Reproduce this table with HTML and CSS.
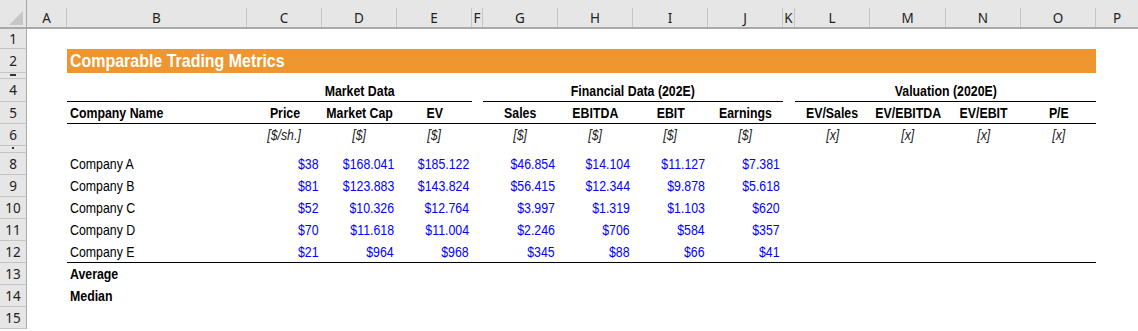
FILE: index.html
```html
<!DOCTYPE html>
<html lang="en">
<head>
  <meta charset="UTF-8">
  <meta name="viewport" content="width=device-width, initial-scale=1.0">
  <title>Comparable Trading Metrics</title>
  <link rel="stylesheet" href="styles.css">
</head>
<body>
  <div class="sheet">
    <div class="colhead">
      <div class="corner">
        <svg width="14" height="14" viewBox="0 0 14 14"><polygon points="14,0 14,14 0,14" fill="#c6c6c6"/></svg>
      </div>
      <div class="letter">A</div>
      <div class="letter">B</div>
      <div class="letter">C</div>
      <div class="letter">D</div>
      <div class="letter">E</div>
      <div class="letter">F</div>
      <div class="letter">G</div>
      <div class="letter">H</div>
      <div class="letter">I</div>
      <div class="letter">J</div>
      <div class="letter">K</div>
      <div class="letter">L</div>
      <div class="letter">M</div>
      <div class="letter">N</div>
      <div class="letter">O</div>
      <div class="letter last">P</div>
    </div>

    <div class="row r-20"><div class="rh">1</div></div>

    <div class="row r-24">
      <div class="rh">2</div>
      <div class="title"><span class="t">Comparable Trading Metrics</span></div>
    </div>

    <!-- rows 3 and 7 are squeezed almost shut -->
    <div class="row r-small"><div class="rh"><span class="tick"></span></div></div>

    <div class="row r-23">
      <div class="rh">4</div>
      <div class="cell col-b line"></div>
      <div class="cell group span-3 line"><span class="t">Market Data</span></div>
      <div class="cell"></div>
      <div class="cell group span-4 line"><span class="t">Financial Data (202E)</span></div>
      <div class="cell"></div>
      <div class="cell group span-4 line"><span class="t">Valuation (2020E)</span></div>
    </div>

    <div class="row">
      <div class="rh">5</div>
      <div class="cell col-b line bold left"><span class="t">Company Name</span></div>
      <div class="cell line bold"><span class="t">Price</span></div>
      <div class="cell line bold"><span class="t">Market Cap</span></div>
      <div class="cell line bold"><span class="t">EV</span></div>
      <div class="cell line"></div>
      <div class="cell line bold"><span class="t">Sales</span></div>
      <div class="cell line bold"><span class="t">EBITDA</span></div>
      <div class="cell line bold"><span class="t">EBIT</span></div>
      <div class="cell line bold"><span class="t">Earnings</span></div>
      <div class="cell line"></div>
      <div class="cell line bold"><span class="t">EV/Sales</span></div>
      <div class="cell line bold"><span class="t">EV/EBITDA</span></div>
      <div class="cell line bold"><span class="t">EV/EBIT</span></div>
      <div class="cell line bold"><span class="t">P/E</span></div>
    </div>

    <div class="row">
      <div class="rh">6</div>
      <div class="cell col-b"></div>
      <div class="cell unit"><span class="t">[$/sh.]</span></div>
      <div class="cell unit"><span class="t">[$]</span></div>
      <div class="cell unit"><span class="t">[$]</span></div>
      <div class="cell"></div>
      <div class="cell unit"><span class="t">[$]</span></div>
      <div class="cell unit"><span class="t">[$]</span></div>
      <div class="cell unit"><span class="t">[$]</span></div>
      <div class="cell unit"><span class="t">[$]</span></div>
      <div class="cell"></div>
      <div class="cell unit"><span class="t">[x]</span></div>
      <div class="cell unit"><span class="t">[x]</span></div>
      <div class="cell unit"><span class="t">[x]</span></div>
      <div class="cell unit"><span class="t">[x]</span></div>
    </div>

    <div class="row r-small r-7"><div class="rh"><span class="tick dot"></span></div></div>

    <div class="row">
      <div class="rh">8</div>
      <div class="cell col-b left"><span class="t">Company A</span></div>
      <div class="cell num"><span class="t">$38</span></div>
      <div class="cell num"><span class="t">$168.041</span></div>
      <div class="cell num"><span class="t">$185.122</span></div>
      <div class="cell"></div>
      <div class="cell num"><span class="t">$46.854</span></div>
      <div class="cell num"><span class="t">$14.104</span></div>
      <div class="cell num"><span class="t">$11.127</span></div>
      <div class="cell num"><span class="t">$7.381</span></div>
    </div>

    <div class="row">
      <div class="rh">9</div>
      <div class="cell col-b left"><span class="t">Company B</span></div>
      <div class="cell num"><span class="t">$81</span></div>
      <div class="cell num"><span class="t">$123.883</span></div>
      <div class="cell num"><span class="t">$143.824</span></div>
      <div class="cell"></div>
      <div class="cell num"><span class="t">$56.415</span></div>
      <div class="cell num"><span class="t">$12.344</span></div>
      <div class="cell num"><span class="t">$9.878</span></div>
      <div class="cell num"><span class="t">$5.618</span></div>
    </div>

    <div class="row">
      <div class="rh">10</div>
      <div class="cell col-b left"><span class="t">Company C</span></div>
      <div class="cell num"><span class="t">$52</span></div>
      <div class="cell num"><span class="t">$10.326</span></div>
      <div class="cell num"><span class="t">$12.764</span></div>
      <div class="cell"></div>
      <div class="cell num"><span class="t">$3.997</span></div>
      <div class="cell num"><span class="t">$1.319</span></div>
      <div class="cell num"><span class="t">$1.103</span></div>
      <div class="cell num"><span class="t">$620</span></div>
    </div>

    <div class="row">
      <div class="rh">11</div>
      <div class="cell col-b left"><span class="t">Company D</span></div>
      <div class="cell num"><span class="t">$70</span></div>
      <div class="cell num"><span class="t">$11.618</span></div>
      <div class="cell num"><span class="t">$11.004</span></div>
      <div class="cell"></div>
      <div class="cell num"><span class="t">$2.246</span></div>
      <div class="cell num"><span class="t">$706</span></div>
      <div class="cell num"><span class="t">$584</span></div>
      <div class="cell num"><span class="t">$357</span></div>
    </div>

    <div class="row">
      <div class="rh">12</div>
      <div class="cell col-b left line"><span class="t">Company E</span></div>
      <div class="cell num line"><span class="t">$21</span></div>
      <div class="cell num line"><span class="t">$964</span></div>
      <div class="cell num line"><span class="t">$968</span></div>
      <div class="cell line"></div>
      <div class="cell num line"><span class="t">$345</span></div>
      <div class="cell num line"><span class="t">$88</span></div>
      <div class="cell num line"><span class="t">$66</span></div>
      <div class="cell num line"><span class="t">$41</span></div>
      <div class="cell line"></div>
      <div class="cell line"></div>
      <div class="cell line"></div>
      <div class="cell line"></div>
      <div class="cell line"></div>
    </div>

    <div class="row">
      <div class="rh">13</div>
      <div class="cell col-b left bold"><span class="t">Average</span></div>
    </div>

    <div class="row">
      <div class="rh">14</div>
      <div class="cell col-b left bold"><span class="t">Median</span></div>
    </div>

    <div class="row"><div class="rh">15</div></div>
  </div>
</body>
</html>
```

FILE: styles.css
```css
* {
  margin: 0;
  padding: 0;
  box-sizing: border-box;
}

body {
  background-color: #fff;
  font-family: "Liberation Sans", Arial, sans-serif;
  font-size: 14.7px;
  color: #000;
  overflow: hidden;
}

.sheet {
  width: 1138px;
  height: 331px;
  overflow: hidden;
}

/* shared column template: row header, A..P */
.colhead,
.row {
  display: grid;
  grid-template-columns: 27px 40px 180px 75px 75px 75px 11px 75px 75px 75px 75px 12px 75px 76px 75px 75px 1fr;
}

.colhead {
  height: 29px;
  padding-top: 8px;
  background-color: #e6e6e6;
  border-bottom: 2px solid #a9a9a9;
  font-family: "Noto Sans", "Open Sans", sans-serif;
  font-size: 13.5px;
  color: #222;
}

.corner {
  margin-top: -8px;
  padding: 11px 0 0 9px;
  border-right: 1px solid #a9a9a9;
}

.corner svg {
  display: block;
}

.letter {
  display: flex;
  align-items: center;
  justify-content: center;
  border-right: 1px solid #c4c4c4;
}

.letter.last {
  border-right: none;
}

.row {
  height: 22px;
}

.r-20 { height: 20px; }
.r-23 { height: 23px; }
.r-24 { height: 24px; }
.r-small { height: 6px; }
.r-7 { height: 7px; }

.rh {
  display: flex;
  align-items: center;
  justify-content: center;
  overflow: hidden;
  background-color: #e6e6e6;
  border-right: 1px solid #a9a9a9;
  border-bottom: 1px solid #c4c4c4;
  font-family: "Noto Sans", "Open Sans", sans-serif;
  font-size: 13.5px;
  color: #222;
}

.r-small .rh {
  align-items: flex-start;
}

.tick {
  width: 6px;
  height: 2px;
  margin-top: 1px;
  background-color: #333;
}

.tick.dot {
  width: 2px;
}

/* Arial Narrow look: Arial squeezed */
.t {
  display: inline-block;
  transform: scaleX(0.84);
  transform-origin: center bottom;
}

.left .t,
.title .t {
  transform-origin: left bottom;
}

.num .t {
  transform-origin: right bottom;
}

.title {
  grid-column: 3 / 17;
  display: flex;
  align-items: flex-end;
  padding: 0 0 1px 3px;
  background-color: #ee962f;
  color: #fff;
  font-weight: bold;
  font-size: 19px;
  line-height: 22px;
  white-space: nowrap;
}

.cell {
  display: flex;
  align-items: flex-end;
  justify-content: center;
  padding: 0 3px 2px;
  line-height: 17px;
  white-space: nowrap;
}

.col-b { grid-column: 3; }
.span-3 { grid-column: span 3; }
.span-4 { grid-column: span 4; }

.line {
  border-bottom: 1px solid #000;
}

.line.cell {
  padding-bottom: 1px;
}

.group,
.bold {
  font-weight: bold;
}

.left {
  justify-content: flex-start;
}

.num {
  justify-content: flex-end;
  color: #0000ff;
}

.unit {
  font-style: italic;
  color: #222;
}
```
